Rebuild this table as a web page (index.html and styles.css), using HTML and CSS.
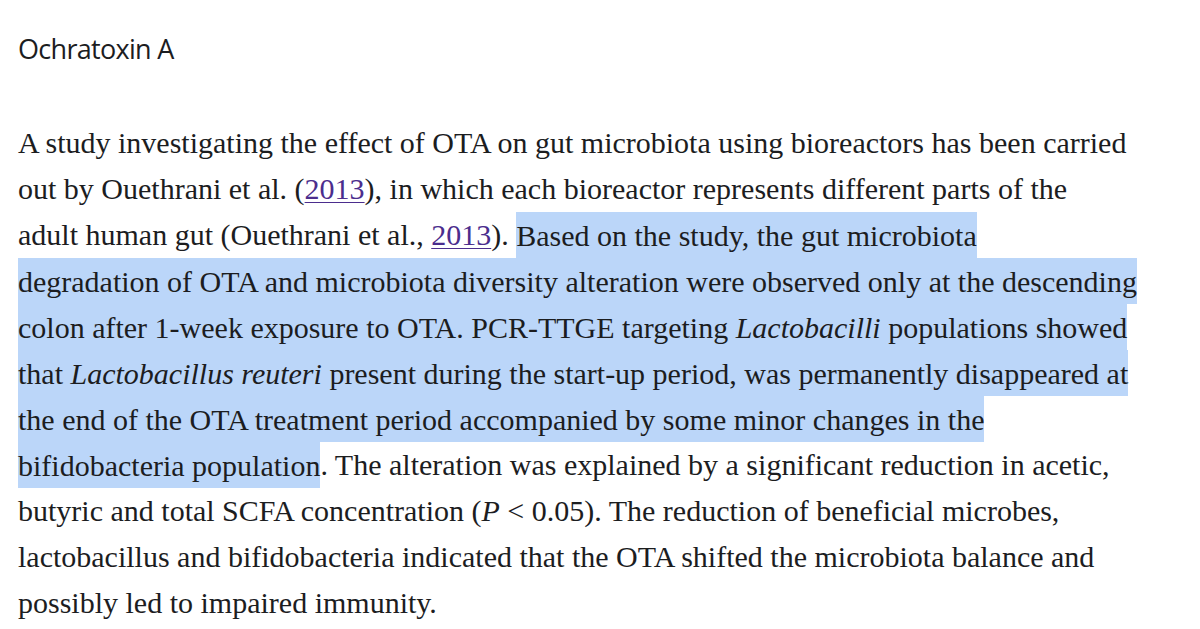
FILE: index.html
```html
<!DOCTYPE html>
<html>
<head>
<meta charset="utf-8">
<link rel="stylesheet" href="styles.css">
</head>
<body>
<section class="article-section">
<h3 class="section-title">Ochratoxin A</h3>
<p class="para">A study investigating the effect of OTA on gut microbiota using bioreactors has been carried<br>out by Ouethrani et al. (<a class="ref" href="#b1">2013</a>), in which each bioreactor represents different parts of the<br>adult human gut (Ouethrani et al., <a class="ref" href="#b1">2013</a>). <span class="hl">Based on the study, the gut microbiota<br>degradation of OTA and microbiota diversity alteration were observed only at the descending<br>colon after 1-week exposure to OTA. PCR-TTGE targeting <i>Lactobacilli</i> populations showed<br>that <i>Lactobacillus reuteri</i> present during the start-up period, was permanently disappeared at<br>the end of the OTA treatment period accompanied by some minor changes in the<br>bifidobacteria population</span>. The alteration was explained by a significant reduction in acetic,<br>butyric and total SCFA concentration (<i>P</i> &lt; 0.05). The reduction of beneficial microbes,<br>lactobacillus and bifidobacteria indicated that the OTA shifted the microbiota balance and<br>possibly led to impaired immunity.</p>
</section>
</body>
</html>
```
FILE: styles.css
```css
html, body {
  margin: 0;
  padding: 0;
  background: #ffffff;
}
body {
  color: #1c1d1f;
}
.article-section {
  padding: 0 0 0 18px;
}
.section-title {
  font-family: "Open Sans", sans-serif;
  font-weight: 400;
  font-size: 27px;
  letter-spacing: -0.7px;
  line-height: 32px;
  margin: 0;
  padding-top: 32.5px;
  color: #1c1d1f;
}
.para {
  font-family: "Liberation Serif", serif;
  font-size: 30px;
  line-height: 46px;
  margin: 55.5px 0 0 0;
  white-space: nowrap;
}
.ref {
  color: #4b2d8d;
  text-decoration: underline;
  text-decoration-thickness: 1px;
  text-underline-offset: 3px;
}
.hl {
  background: #bbd6f9;
  padding: 6.5px 0;
}
```
